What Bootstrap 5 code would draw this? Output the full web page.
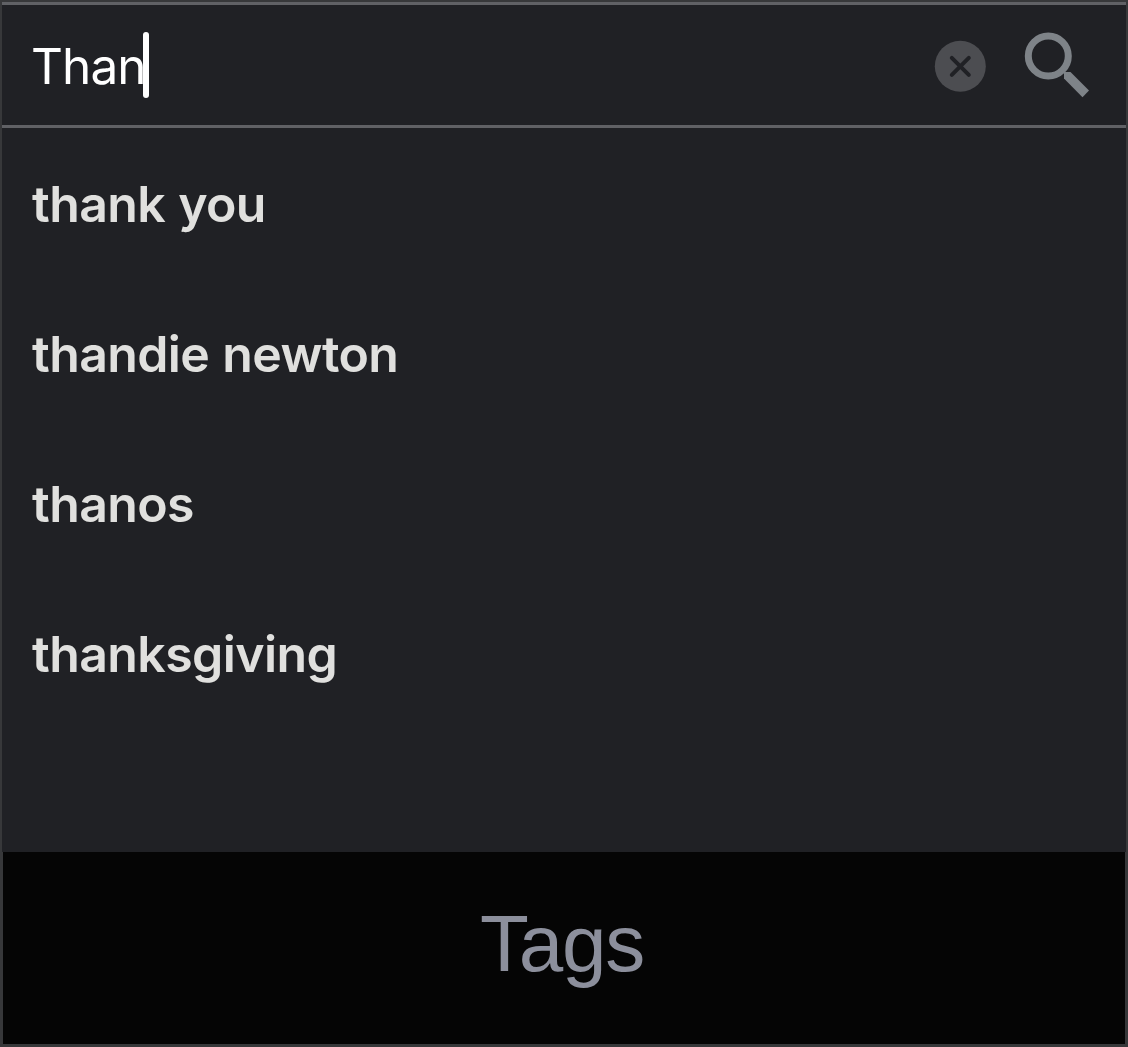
<!DOCTYPE html>
<html lang="en">
<head>
<meta charset="utf-8">
<meta name="viewport" content="width=device-width, initial-scale=1">
<title>Search</title>
<link href="https://cdn.jsdelivr.net/npm/bootstrap@5.3.0/dist/css/bootstrap.min.css" rel="stylesheet">
<style>
body { background: #202125; font-family: Inter, "Liberation Sans", sans-serif; }
.app-frame { height: 1047px; border: 2px solid #37383a; border-bottom-width: 3px; }
.search-bar { height: 126px; border-top: 3px solid #606165; border-bottom: 3px solid #606165; padding: 0 37px 0 29px; }
.query { font-size: 49.5px; line-height: 66px; color: #fff; letter-spacing: -.9px; padding-top: 2px; }
.caret { width: 6px; height: 66px; border-radius: 3px; background: #fff; margin-left: -3px; }
.clear-icon { margin: 2px 37px 0 0; }
.suggestions { height: 724px; padding-top: 1px; }
.suggestion { height: 150px; padding: 0 30px; font-size: 50px; line-height: 150px; font-weight: 600; color: #e0e0de; letter-spacing: -.6px; word-spacing: 1px; background: transparent; border: 0; }
.tags-panel { background: #050505; border: solid #37383a; border-width: 0 1px; color: #8c8f9c; font: 80px/1 "Liberation Sans", Arial, sans-serif; letter-spacing: -1.3px; padding: 0 4px 8px 0; }
</style>
<script src="https://cdn.jsdelivr.net/npm/bootstrap@5.3.0/dist/js/bootstrap.bundle.min.js"></script>
</head>
<body>
<main class="app-frame d-flex flex-column overflow-hidden">
  <div class="search-bar d-flex align-items-center flex-shrink-0">
    <div class="d-flex align-items-center me-auto">
      <span class="query">Than</span><span class="caret"></span>
    </div>
    <svg class="clear-icon" width="52" height="52" viewBox="0 0 52 52" role="img" aria-label="Clear">
      <circle cx="26.3" cy="26.3" r="25.5" fill="#4c4d51"/>
      <path d="M17.8 17.8 34.8 34.8M34.8 17.8 17.8 34.8" stroke="#202125" stroke-width="4" stroke-linecap="round"/>
    </svg>
    <svg width="66" height="66" viewBox="0 0 66 66" role="img" aria-label="Search">
      <circle cx="25.3" cy="24" r="20" fill="none" stroke="#7e8388" stroke-width="7"/>
      <path d="M41 40H47.5L66 58.5 59.5 65.3 41 46.5Z" fill="#7e8388"/>
    </svg>
  </div>
  <div class="suggestions list-group list-group-flush flex-shrink-0">
    <div class="suggestion list-group-item">thank you</div>
    <div class="suggestion list-group-item">thandie newton</div>
    <div class="suggestion list-group-item">thanos</div>
    <div class="suggestion list-group-item">thanksgiving</div>
  </div>
  <footer class="tags-panel flex-fill d-flex align-items-center justify-content-center"><span>Tags</span></footer>
</main>
</body>
</html>
